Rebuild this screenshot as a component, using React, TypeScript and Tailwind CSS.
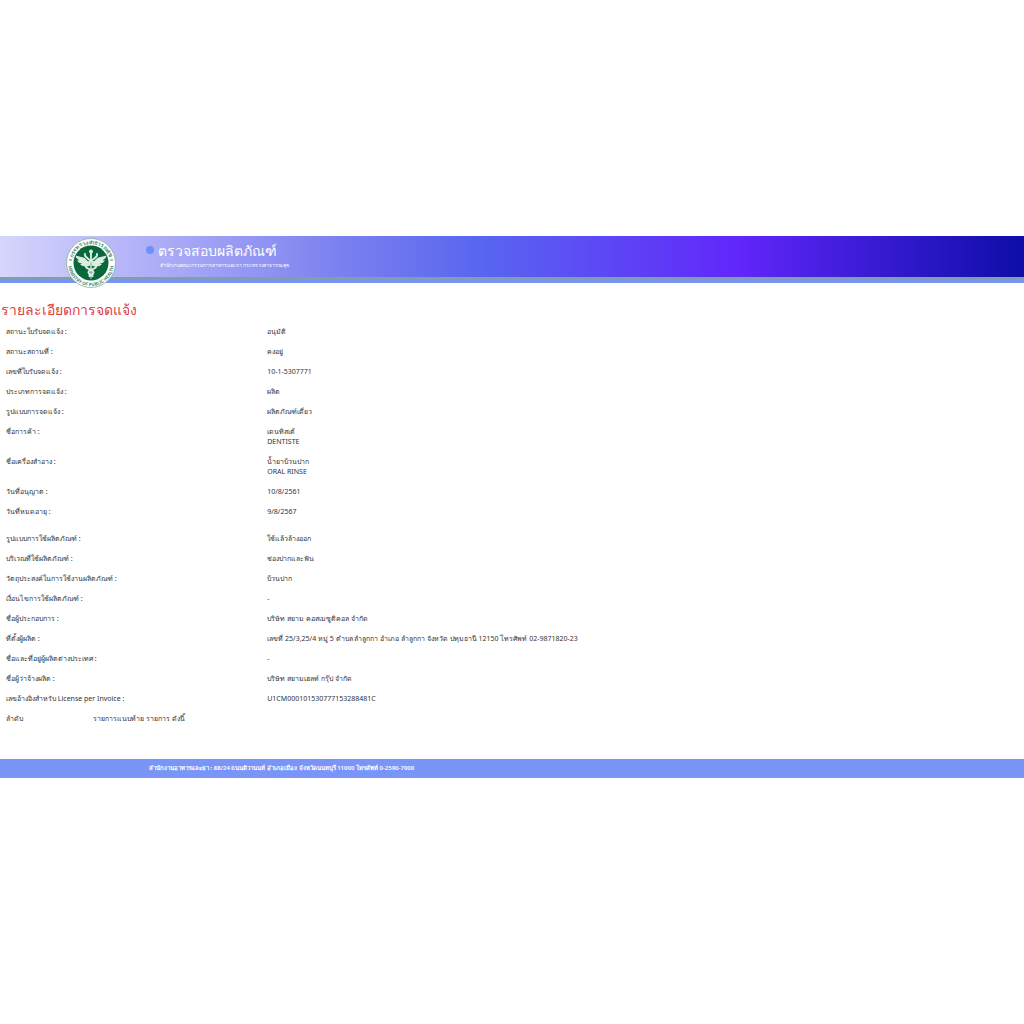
import React from "react";

interface DetailRow {
  label: string;
  values: string[];
}

const LICENSE_ROWS: DetailRow[] = [
  { label: "สถานะใบรับจดแจ้ง :", values: ["อนุมัติ"] },
  { label: "สถานะสถานที่ :", values: ["คงอยู่"] },
  { label: "เลขที่ใบรับจดแจ้ง :", values: ["10-1-5307771"] },
  { label: "ประเภทการจดแจ้ง :", values: ["ผลิต"] },
  { label: "รูปแบบการจดแจ้ง :", values: ["ผลิตภัณฑ์เดี่ยว"] },
  { label: "ชื่อการค้า :", values: ["เดนทิสเต้", "DENTISTE"] },
  { label: "ชื่อเครื่องสำอาง :", values: ["น้ำยาบ้วนปาก", "ORAL RINSE"] },
  { label: "วันที่อนุญาต :", values: ["10/8/2561"] },
  { label: "วันที่หมดอายุ :", values: ["9/8/2567"] },
];

const PRODUCT_ROWS: DetailRow[] = [
  { label: "รูปแบบการใช้ผลิตภัณฑ์ :", values: ["ใช้แล้วล้างออก"] },
  { label: "บริเวณที่ใช้ผลิตภัณฑ์ :", values: ["ช่องปากและฟัน"] },
  { label: "วัตถุประสงค์ในการใช้งานผลิตภัณฑ์ :", values: ["บ้วนปาก"] },
  { label: "เงื่อนไขการใช้ผลิตภัณฑ์ :", values: ["-"] },
  { label: "ชื่อผู้ประกอบการ :", values: ["บริษัท สยาม คอสเมซูติคอล จำกัด"] },
  {
    label: "ที่ตั้งผู้ผลิต :",
    values: ["เลขที่ 25/3,25/4 หมู่ 5 ตำบล ลำลูกกา อำเภอ ลำลูกกา จังหวัด ปทุมธานี 12150 โทรศัพท์ 02-9871820-23"],
  },
  { label: "ชื่อและที่อยู่ผู้ผลิตต่างประเทศ :", values: ["-"] },
  { label: "ชื่อผู้ว่าจ้างผลิต :", values: ["บริษัท สยามเฮลท์ กรุ๊ป จำกัด"] },
  { label: "เลขอ้างอิงสำหรับ License per Invoice :", values: ["U1CM000101530777153288481C"] },
];

function MinistryLogo() {
  return (
    <svg viewBox="0 0 100 100" className="h-[50px] w-[50px] shrink-0" role="img" aria-label="Ministry of Public Health">
      <defs>
        <path id="ring-top" d="M 12 50 A 38 38 0 0 1 88 50" />
        <path id="ring-bottom" d="M 4 50 A 46 46 0 0 0 96 50" />
      </defs>
      <circle cx="50" cy="50" r="49" fill="#fff" stroke="#7fae97" strokeWidth="1.5" />
      <circle cx="50" cy="50" r="35" fill="#08683a" />
      <g fill="#4c8a6c" fontSize="11" fontWeight="700" textAnchor="middle">
        <text>
          <textPath href="#ring-top" startOffset="50%">กระทรวงสาธารณสุข</textPath>
        </text>
        <text fontSize="9">
          <textPath href="#ring-bottom" startOffset="50%">MINISTRY OF PUBLIC HEALTH</textPath>
        </text>
      </g>
      <path d="M6 44h6M88 44h6" stroke="#4c8a6c" strokeWidth="2" />
      {/* Winged staff */}
      <g fill="#dcece3">
        <path d="M48 49C43 48 41 41 35 39C29 37 24 37 19 35C20 40 23 43 27 44C25 45 24 45 22 44C24 49 28 51 32 51C31 52 30 52 28 52C33 58 43 58 48 55Z" />
        <path d="M52 49C57 48 59 41 65 39C71 37 76 37 81 35C80 40 77 43 73 44C75 45 76 45 78 44C76 49 72 51 68 51C69 52 70 52 72 52C67 58 57 58 52 55Z" />
        <circle cx="50" cy="27" r="4" />
        <path d="M48 30h4l-1 50l-1 3l-1-3Z" />
      </g>
      <g fill="none" stroke="#dcece3" strokeWidth="4" strokeLinecap="round">
        <path d="M38 32C36 37 42 39 46 43C54 48 62 52 60 58C57 64 45 62 45 69C45 73 50 73 53 76" />
        <path d="M62 32C64 37 58 39 54 43C46 48 38 52 40 58C43 64 55 62 55 69C55 73 50 73 47 76" />
      </g>
    </svg>
  );
}

function DetailTable({ rows, className = "" }: { rows: DetailRow[]; className?: string }) {
  return (
    <table className={`w-full table-fixed border-collapse text-left ${className}`}>
      <tbody>
        {rows.map((row) => (
          <tr key={row.label} className="align-top">
            <th scope="row" className="w-[26%] py-[5px] pl-1.5 font-normal whitespace-nowrap">
              {row.label}
            </th>
            <td className="py-[5px] pl-px">
              {row.values.map((value) => (
                <p key={value}>{value}</p>
              ))}
            </td>
          </tr>
        ))}
      </tbody>
    </table>
  );
}

export default function App() {
  return (
    <div className="bg-white pt-[236px] font-['Noto_Sans','Open_Sans',sans-serif] text-[#333]">
      <header className="flex h-[47px] items-start border-b-4 border-[#7895f5] bg-[linear-gradient(90deg,#d6d5fb_0%,#aeaef7_15%,#7b81ef_33%,#5866f0_47%,#6127fb_72%,#0d0ea8_100%)]">
        <div className="flex h-[43px] w-full items-start border-b-2 border-[#829fa8] pl-[66px]">
          <div className="mt-0.5 -mb-4">
            <MinistryLogo />
          </div>
          <span className="mt-2.5 ml-[30px] h-2 w-2 shrink-0 rounded-full bg-[#6f90f6]" />
          <div className="ml-1 whitespace-nowrap text-white">
            <h1 className="mt-1 text-[14px] leading-[22px] font-medium">ตรวจสอบผลิตภัณฑ์</h1>
            <p className="ml-0.5 text-[5px] leading-[6px] font-medium">สำนักงานคณะกรรมการอาหารและยา กระทรวงสาธารณสุข</p>
          </div>
        </div>
      </header>

      <main className="text-[7px] leading-[10px]">
        <h2 className="mt-[17px] mb-0.5 pl-px text-[14px] leading-[20px] text-[#e0403f]">รายละเอียดการจดแจ้ง</h2>
        <DetailTable rows={LICENSE_ROWS} />
        <DetailTable rows={PRODUCT_ROWS} className="mt-[7px]" />
        <div className="flex py-[5px] pl-1.5">
          <p className="w-[87px]">ลำดับ</p>
          <p>รายการแนบท้าย รายการ ดังนี้</p>
        </div>
      </main>

      <footer className="mt-[30px] bg-[#7895f7] pl-[149px] text-[6px] leading-[19px] font-semibold text-white">
        <strong className="font-bold">สำนักงานอาหารและยา :</strong> 88/24 ถนนติวานนท์ อำเภอเมือง จังหวัดนนทบุรี 11000 โทรศัพท์
        0-2590-7000
      </footer>
    </div>
  );
}
